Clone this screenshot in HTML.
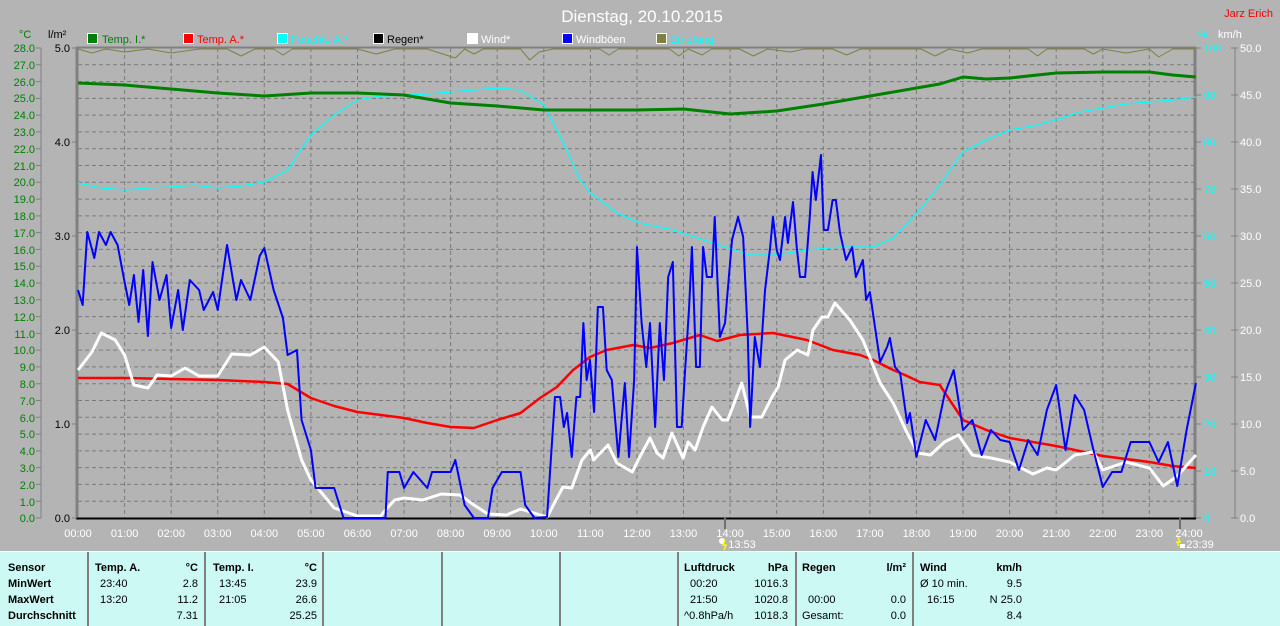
<!DOCTYPE html>
<html><head><meta charset="utf-8"><style>
body{margin:0;width:1280px;height:625px;overflow:hidden;background:#b4b4b4;font-family:"Liberation Sans",sans-serif;}
svg{position:absolute;left:0;top:0}
#tbl{position:absolute;left:0;top:551px;width:1280px;height:74px;background:#cdf9f5;border-top:1px solid #e8fffd;font-size:11px;color:#000}
.d{position:absolute;top:0;width:2px;height:74px;background:#808080}
.t{position:absolute;white-space:nowrap}
.b{font-weight:bold}
.r{text-align:right}
</style></head><body>
<svg width="1280" height="551" xmlns="http://www.w3.org/2000/svg" font-family="Liberation Sans, sans-serif" font-size="11">
<text x="642" y="22" fill="#fff" font-size="17" text-anchor="middle">Dienstag, 20.10.2015</text>
<text x="1273" y="17" fill="#f00" font-size="11" text-anchor="end">Jarz Erich</text>
<text x="19" y="38" fill="#008000">°C</text>
<text x="48" y="38" fill="#000">l/m²</text>
<text x="1198" y="38" fill="#0ff">%</text>
<text x="1218" y="38" fill="#fff">km/h</text>
<g font-size="11">
<rect x="87.5" y="33.5" width="10" height="10" fill="#008000" stroke="#fff"/><text x="102" y="43" fill="#008000">Temp. I.*</text>
<rect x="183.5" y="33.5" width="10" height="10" fill="#f00" stroke="#fff"/><text x="197" y="43" fill="#f00">Temp. A.*</text>
<rect x="277.5" y="33.5" width="10" height="10" fill="#0ff" stroke="#fff"/><text x="291" y="43" fill="#0ff">Feuchte A.*</text>
<rect x="373.5" y="33.5" width="10" height="10" fill="#000" stroke="#fff"/><text x="387" y="43" fill="#000">Regen*</text>
<rect x="467.5" y="33.5" width="10" height="10" fill="#fff" stroke="#fff"/><text x="481" y="43" fill="#fff">Wind*</text>
<rect x="562.5" y="33.5" width="10" height="10" fill="#00f" stroke="#fff"/><text x="576" y="43" fill="#fff">Windböen</text>
<rect x="656.5" y="33.5" width="10" height="10" fill="#808040" stroke="#fff"/><text x="670" y="43" fill="#0ff">Empfang</text>
</g>
<g stroke="#7a7a7a" stroke-dasharray="4,3" stroke-width="1">
<path d="M78 64.8H1194M78 81.6H1194M78 98.4H1194M78 115.1H1194M78 131.9H1194M78 148.7H1194M78 165.5H1194M78 182.3H1194M78 199.1H1194M78 215.9H1194M78 232.6H1194M78 249.4H1194M78 266.2H1194M78 283H1194M78 299.8H1194M78 316.6H1194M78 333.4H1194M78 350.1H1194M78 366.9H1194M78 383.7H1194M78 400.5H1194M78 417.3H1194M78 434.1H1194M78 450.9H1194M78 467.6H1194M78 484.4H1194M78 501.2H1194"/>
<path d="M124.6 48V518M171.2 48V518M217.7 48V518M264.3 48V518M310.9 48V518M357.5 48V518M404.1 48V518M450.6 48V518M497.2 48V518M543.8 48V518M590.4 48V518M637 48V518M683.5 48V518M730.1 48V518M776.7 48V518M823.3 48V518M869.9 48V518M916.4 48V518M963 48V518M1009.6 48V518M1056.2 48V518M1102.8 48V518M1149.3 48V518"/>
</g>
<path d="M77 47V519" stroke="#808080" stroke-width="3"/>
<path d="M76 47.5H1196" stroke="#808080" stroke-width="2"/>
<path d="M1195 47V519" stroke="#808080" stroke-width="3"/>
<path d="M76 518.5H1196" stroke="#000" stroke-width="2"/>
<path d="M41 48V518M1235 48V518" stroke="#808080"/>
<g fill="#008000" text-anchor="end">
<text x="35" y="52">28.0</text><text x="35" y="69">27.0</text><text x="35" y="86">26.0</text><text x="35" y="102">25.0</text><text x="35" y="119">24.0</text><text x="35" y="136">23.0</text><text x="35" y="153">22.0</text><text x="35" y="170">21.0</text><text x="35" y="186">20.0</text><text x="35" y="203">19.0</text><text x="35" y="220">18.0</text><text x="35" y="237">17.0</text><text x="35" y="254">16.0</text><text x="35" y="270">15.0</text><text x="35" y="287">14.0</text><text x="35" y="304">13.0</text><text x="35" y="321">12.0</text><text x="35" y="338">11.0</text><text x="35" y="354">10.0</text><text x="35" y="371">9.0</text><text x="35" y="388">8.0</text><text x="35" y="405">7.0</text><text x="35" y="422">6.0</text><text x="35" y="438">5.0</text><text x="35" y="455">4.0</text><text x="35" y="472">3.0</text><text x="35" y="489">2.0</text><text x="35" y="506">1.0</text><text x="35" y="522">0.0</text>
</g>
<path d="M36 48H41M36 64.8H41M36 81.6H41M36 98.4H41M36 115.1H41M36 131.9H41M36 148.7H41M36 165.5H41M36 182.3H41M36 199.1H41M36 215.9H41M36 232.6H41M36 249.4H41M36 266.2H41M36 283H41M36 299.8H41M36 316.6H41M36 333.4H41M36 350.1H41M36 366.9H41M36 383.7H41M36 400.5H41M36 417.3H41M36 434.1H41M36 450.9H41M36 467.6H41M36 484.4H41M36 501.2H41M36 518H41" stroke="#808080"/>
<g fill="#000" text-anchor="end">
<text x="70" y="52">5.0</text><text x="70" y="146">4.0</text><text x="70" y="240">3.0</text><text x="70" y="334">2.0</text><text x="70" y="428">1.0</text><text x="70" y="522">0.0</text>
</g>
<path d="M72 48H77M72 142H77M72 236H77M72 330H77M72 424H77M72 518H77" stroke="#808080"/>
<g fill="#0ff" text-anchor="end">
<text x="1222" y="52">100</text><text x="1216" y="99">90</text><text x="1216" y="146">80</text><text x="1216" y="193">70</text><text x="1216" y="240">60</text><text x="1216" y="287">50</text><text x="1216" y="334">40</text><text x="1216" y="381">30</text><text x="1216" y="428">20</text><text x="1216" y="475">10</text><text x="1210" y="522">0</text>
</g>
<path d="M1196 48H1201M1196 95H1201M1196 142H1201M1196 189H1201M1196 236H1201M1196 283H1201M1196 330H1201M1196 377H1201M1196 424H1201M1196 471H1201M1196 518H1201" stroke="#808080"/>
<path d="M1231 48H1238M1231 95H1238M1231 142H1238M1231 189H1238M1231 236H1238M1231 283H1238M1231 330H1238M1231 377H1238M1231 424H1238M1231 471H1238M1231 518H1238" stroke="#808080"/>
<g fill="#fff">
<text x="1240" y="52">50.0</text><text x="1240" y="99">45.0</text><text x="1240" y="146">40.0</text><text x="1240" y="193">35.0</text><text x="1240" y="240">30.0</text><text x="1240" y="287">25.0</text><text x="1240" y="334">20.0</text><text x="1240" y="381">15.0</text><text x="1240" y="428">10.0</text><text x="1240" y="475">5.0</text><text x="1240" y="522">0.0</text>
</g>
<g fill="#fff" text-anchor="middle">
<text x="78" y="537">00:00</text><text x="124.6" y="537">01:00</text><text x="171.2" y="537">02:00</text><text x="217.7" y="537">03:00</text><text x="264.3" y="537">04:00</text><text x="310.9" y="537">05:00</text><text x="357.5" y="537">06:00</text><text x="404.1" y="537">07:00</text><text x="450.6" y="537">08:00</text><text x="497.2" y="537">09:00</text><text x="543.8" y="537">10:00</text><text x="590.4" y="537">11:00</text><text x="637" y="537">12:00</text><text x="683.5" y="537">13:00</text><text x="730.1" y="537">14:00</text><text x="776.7" y="537">15:00</text><text x="823.3" y="537">16:00</text><text x="869.9" y="537">17:00</text><text x="916.4" y="537">18:00</text><text x="963" y="537">19:00</text><text x="1009.6" y="537">20:00</text><text x="1056.2" y="537">21:00</text><text x="1102.8" y="537">22:00</text><text x="1149.3" y="537">23:00</text><text x="1189" y="537">24:00</text>
<text x="742" y="548">13:53</text><text x="1200" y="548">23:39</text>
</g>
<path d="M725 517V529M1180 517V529" stroke="#707070" stroke-width="2"/>
<circle cx="722" cy="541" r="3" fill="#fff"/><path d="M725 540l-2 5h3l-2 5" stroke="#ff0" fill="none" stroke-width="1.5"/>
<path d="M1178 537l2 5h-3l2 4" stroke="#ff0" fill="none" stroke-width="1.5"/><rect x="1180" y="544" width="5" height="4" fill="#fff"/>
<g transform="translate(78,0) scale(46.58,1)" fill="none" stroke-linejoin="round">
<polyline vector-effect="non-scaling-stroke" stroke="#808040" stroke-width="1" points="0,49 0.3,53 0.6,49 1,52 1.5,49 2,53 2.6,49 3.2,49 3.5,56 3.8,49 4.2,49 4.4,55 4.6,49 6,49 6.4,54 6.8,49 7.5,49 8.1,58 8.3,49 8.5,54 8.7,49 9.5,49 9.7,60 9.9,52 10.2,49 11.2,49 11.4,55 11.6,49 12.7,49 12.9,56 13.1,49 13.4,55 13.6,49 14.2,49 14.5,56 14.8,49 15.3,52 15.6,49 16.2,49 16.5,55 16.8,49 18.1,49 18.4,56 18.7,49 19.1,53 19.4,49 20.4,49 20.6,56 20.8,49 21.6,49 21.8,54 22,49 22.5,53 23,49 23.2,57 23.5,49 24,49"/>
<polyline vector-effect="non-scaling-stroke" stroke="#0ff" stroke-width="1.3" points="0,183 0.5,188 1,190 1.5,188 2,187 2.5,185 3,188 3.5,186 4,182 4.5,170 5,135 5.5,115 6,100 6.5,96 7,95 7.5,94 8,92 8.5,90 9,88 9.5,90 10,105 10.39,140 10.78,180 11,193 11.57,213 12.06,223 12.77,230 13.63,243 14.43,255 15,255 15.65,250 16.36,247 17.07,247 17.5,238 18.07,210 18.5,185 19,152 19.5,140 20,130 20.5,126 21,120 21.5,112 22,108 22.5,104 23,102 23.5,100 24,97"/>
<polyline vector-effect="non-scaling-stroke" stroke="#008000" stroke-width="3" points="0,83 1,85 2,89 3,93 4,96 5,93 6,93 7,95 8,103 9,106 10,110 11,110 12,110 13,109 14,114 15,111 16,104 17,96 18,88 18.5,84 19,77 19.5,79 20,78 21,73 22,72 23,72 23.5,75 24,77"/>
<polyline vector-effect="non-scaling-stroke" stroke="#f00" stroke-width="2.5" points="0,378 1,378 2,379 3,380 4,382 4.5,384 5,398 5.5,406 6,412 7,418 7.5,423 8,427 8.5,428 9,420 9.5,413 9.92,398 10.28,387 10.63,370 10.99,357 11.35,350 11.92,345 12.28,348 12.77,343 13.35,335 13.72,341 14.21,335 14.92,333 15.65,340 16.21,350 16.79,355 17.07,360 17.5,370 17.8,376 18.07,382 18.5,385 19,420 19.5,430 20,438 21,446 22,456 23,462 23.5,466 24,468"/>
<polyline vector-effect="non-scaling-stroke" stroke="#fff" stroke-width="3" points="0,370 0.3,352 0.5,333 0.8,340 1,355 1.2,385 1.5,388 1.7,375 2,376 2.3,368 2.6,376 3,376 3.3,354 3.7,355 4,347 4.3,362 4.5,410 4.8,460 5,480 5.5,508 6,516 6.5,516 6.6,510 6.8,500 7,498 7.4,500 7.8,494 8.2,495 8.5,505 8.8,514 9.2,515 9.5,509 10.07,517 10.41,487 10.6,488 10.82,460 11,450 11.07,460 11.38,445 11.57,463 11.9,472 12.06,457 12.28,438 12.43,453 12.56,458 12.75,433 12.99,458 13.1,442 13.25,450 13.42,427 13.61,407 13.83,420 13.95,420 14.25,383 14.43,417 14.68,417 14.9,397 15.03,387 15.18,360 15.44,350 15.67,355 15.78,330 15.97,317 16.1,317 16.25,303 16.57,320 16.85,340 17.22,383 17.5,403 17.8,433 18.03,453 18.3,455 18.6,442 18.9,435 19.2,455 19.6,458 20,462 20.5,474 20.8,468 21,470 21.4,455 21.8,452 22,470 22.5,462 23,468 23.3,486 23.6,476 24,455"/>
<polyline vector-effect="non-scaling-stroke" stroke="#00f" stroke-width="2" points="0,290 0.1,305 0.2,232 0.35,258 0.45,232 0.6,245 0.7,232 0.85,245 1,282 1.1,305 1.2,275 1.3,322 1.4,270 1.5,336 1.6,262 1.75,300 1.9,275 2,328 2.15,290 2.25,330 2.4,280 2.6,290 2.7,310 2.9,292 3,310 3.2,245 3.4,300 3.5,280 3.7,300 3.9,256 4,248 4.2,290 4.4,318 4.5,355 4.7,350 4.8,420 5,450 5.1,488 5.5,488 5.7,518 6.6,518 6.65,472 6.9,472 7,488 7.2,472 7.5,488 7.6,472 8,472 8.1,460 8.3,505 8.5,518 8.8,518 8.9,488 9.1,472 9.5,472 9.6,505 9.8,518 10.07,517 10.24,397 10.35,397 10.43,427 10.5,413 10.6,457 10.7,397 10.78,397 10.85,323 10.92,380 10.99,360 11.08,412 11.16,307 11.27,307 11.35,370 11.46,380 11.6,457 11.74,383 11.83,457 11.94,380 12,247 12.1,323 12.2,367 12.28,323 12.39,427 12.49,323 12.58,380 12.67,277 12.77,262 12.86,427 12.96,427 13.03,373 13.12,307 13.18,247 13.27,367 13.35,367 13.42,247 13.5,277 13.61,277 13.67,217 13.78,337 13.89,323 14.04,240 14.17,217 14.28,237 14.38,337 14.43,427 14.53,337 14.64,367 14.75,290 14.86,247 14.92,217 15,250 15.07,260 15.18,217 15.24,243 15.35,202 15.43,247 15.5,277 15.61,277 15.71,217 15.77,172 15.84,200 15.95,155 16.01,230 16.1,230 16.2,200 16.27,200 16.36,233 16.49,260 16.62,247 16.7,277 16.85,260 16.92,300 17,292 17.22,362 17.37,347 17.43,338 17.54,367 17.65,373 17.8,423 17.86,413 18,457 18.2,420 18.4,440 18.6,395 18.8,370 19,430 19.2,420 19.4,455 19.6,430 19.8,440 20,442 20.2,470 20.4,440 20.6,455 20.8,410 21,385 21.2,450 21.4,395 21.6,410 21.8,450 22,487 22.2,472 22.4,472 22.6,442 23,442 23.2,462 23.4,442 23.6,486 23.8,430 24,383"/>
</g>
</svg>
<div id="tbl">
<div class="d" style="left:87px"></div><div class="d" style="left:204px"></div><div class="d" style="left:322px"></div><div class="d" style="left:441px"></div><div class="d" style="left:559px"></div><div class="d" style="left:677px"></div><div class="d" style="left:795px"></div><div class="d" style="left:912px"></div>
<div class="t b" style="left:8px;top:10px">Sensor</div>
<div class="t b" style="left:8px;top:26px">MinWert</div>
<div class="t b" style="left:8px;top:42px">MaxWert</div>
<div class="t b" style="left:8px;top:58px">Durchschnitt</div>
<div class="t b" style="left:95px;top:10px">Temp. A.</div><div class="t b r" style="right:1082px;top:10px">°C</div>
<div class="t" style="left:100px;top:26px">23:40</div><div class="t r" style="right:1082px;top:26px">2.8</div>
<div class="t" style="left:100px;top:42px">13:20</div><div class="t r" style="right:1082px;top:42px">11.2</div>
<div class="t r" style="right:1082px;top:58px">7.31</div>
<div class="t b" style="left:213px;top:10px">Temp. I.</div><div class="t b r" style="right:963px;top:10px">°C</div>
<div class="t" style="left:219px;top:26px">13:45</div><div class="t r" style="right:963px;top:26px">23.9</div>
<div class="t" style="left:219px;top:42px">21:05</div><div class="t r" style="right:963px;top:42px">26.6</div>
<div class="t r" style="right:963px;top:58px">25.25</div>
<div class="t b" style="left:684px;top:10px">Luftdruck</div><div class="t b r" style="right:492px;top:10px">hPa</div>
<div class="t" style="left:690px;top:26px">00:20</div><div class="t r" style="right:492px;top:26px">1016.3</div>
<div class="t" style="left:690px;top:42px">21:50</div><div class="t r" style="right:492px;top:42px">1020.8</div>
<div class="t" style="left:684px;top:58px">^0.8hPa/h</div><div class="t r" style="right:492px;top:58px">1018.3</div>
<div class="t b" style="left:802px;top:10px">Regen</div><div class="t b r" style="right:374px;top:10px">l/m²</div>
<div class="t" style="left:808px;top:42px">00:00</div><div class="t r" style="right:374px;top:42px">0.0</div>
<div class="t" style="left:802px;top:58px">Gesamt:</div><div class="t r" style="right:374px;top:58px">0.0</div>
<div class="t b" style="left:920px;top:10px">Wind</div><div class="t b r" style="right:258px;top:10px">km/h</div>
<div class="t" style="left:920px;top:26px">Ø 10 min.</div><div class="t r" style="right:258px;top:26px">9.5</div>
<div class="t" style="left:927px;top:42px">16:15</div><div class="t r" style="right:258px;top:42px">N 25.0</div>
<div class="t r" style="right:258px;top:58px">8.4</div>
</div>
</body></html>
